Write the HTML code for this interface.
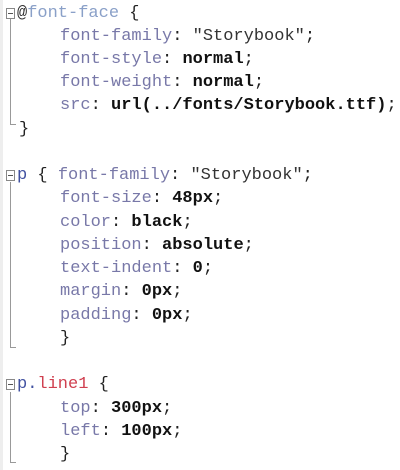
<!DOCTYPE html><html><head><style>
body{margin:0;width:400px;height:470px;background:#fff;position:relative;overflow:hidden;font-family:"Liberation Mono",monospace;font-size:17px}
.l{position:absolute;white-space:pre;line-height:20px;color:#222;margin-top:2px}
.p{color:#7878a8}.v{color:#111;font-weight:bold}.s{color:#333}.b{color:#8aa0c8}.n{color:#4050a0}.r{color:#d04050}
.g{position:absolute;background:#999}
.box{position:absolute;width:7px;height:9px;border:1px solid #888;background:#fff}
.box:after{content:"";position:absolute;left:1px;top:4px;width:5px;height:1px;background:#555}
</style></head><body>
<div class="g" style="left:0;top:0;width:3px;height:470px;background:#eee"></div>
<div class="g" style="left:10px;top:16px;width:1px;height:108px"></div><div class="g" style="left:10px;top:124px;width:6px;height:1px"></div>
<div class="g" style="left:10px;top:182px;width:1px;height:165px"></div><div class="g" style="left:10px;top:347px;width:6px;height:1px"></div>
<div class="g" style="left:10px;top:392px;width:1px;height:70px"></div><div class="g" style="left:10px;top:462px;width:6px;height:1px"></div>
<div class="box" style="left:6px;top:8px"></div>
<div class="box" style="left:6px;top:170px"></div>
<div class="box" style="left:6px;top:379px"></div>
<div class="l" style="left:17px;top:2px"><span class="s">@</span><span class="b">font-face</span> {</div>
<div class="l" style="left:60px;top:25px"><span class="p">font-family</span>: <span class="s">"Storybook"</span>;</div>
<div class="l" style="left:60px;top:48px"><span class="p">font-style</span>: <span class="v">normal</span>;</div>
<div class="l" style="left:60px;top:71px"><span class="p">font-weight</span>: <span class="v">normal</span>;</div>
<div class="l" style="left:60px;top:94px"><span class="p">src</span>: <span class="v">url(../fonts/Storybook.ttf)</span>;</div>
<div class="l" style="left:19px;top:118px">}</div>
<div class="l" style="left:17px;top:164px"><span class="n">p</span> { <span class="p">font-family</span>: <span class="s">"Storybook"</span>;</div>
<div class="l" style="left:60px;top:187px"><span class="p">font-size</span>: <span class="v">48px</span>;</div>
<div class="l" style="left:60px;top:211px"><span class="p">color</span>: <span class="v">black</span>;</div>
<div class="l" style="left:60px;top:234px"><span class="p">position</span>: <span class="v">absolute</span>;</div>
<div class="l" style="left:60px;top:257px"><span class="p">text-indent</span>: <span class="v">0</span>;</div>
<div class="l" style="left:60px;top:280px"><span class="p">margin</span>: <span class="v">0px</span>;</div>
<div class="l" style="left:60px;top:304px"><span class="p">padding</span>: <span class="v">0px</span>;</div>
<div class="l" style="left:60px;top:327px">}</div>
<div class="l" style="left:17px;top:373px"><span class="n">p.</span><span class="r">line1</span> {</div>
<div class="l" style="left:60px;top:397px"><span class="p">top</span>: <span class="v">300px</span>;</div>
<div class="l" style="left:60px;top:420px"><span class="p">left</span>: <span class="v">100px</span>;</div>
<div class="l" style="left:60px;top:443px">}</div>
</body></html>
